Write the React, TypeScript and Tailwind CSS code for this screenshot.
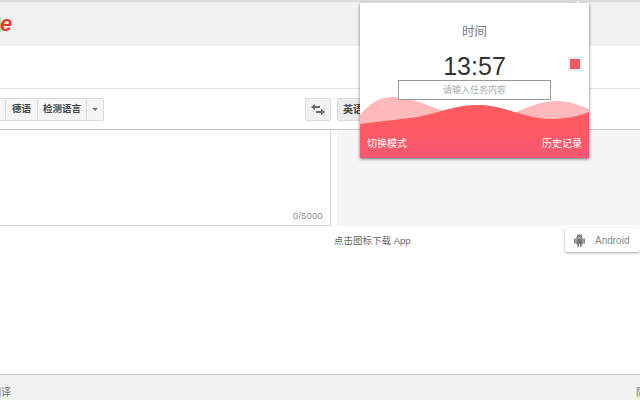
function AndroidIcon() {
  return (
    <svg width="13" height="13" viewBox="0 0 24 24" fill="#777">
      <path d="M6 18c0 .55.45 1 1 1h1v3.5c0 .83.67 1.5 1.5 1.5s1.5-.67 1.5-1.5V19h2v3.5c0 .83.67 1.5 1.5 1.5s1.5-.67 1.5-1.5V19h1c.55 0 1-.45 1-1V8H6v10zM3.5 8C2.67 8 2 8.67 2 9.5v7c0 .83.67 1.5 1.5 1.5S5 17.33 5 16.5v-7C5 8.67 4.33 8 3.5 8zm17 0c-.83 0-1.5.67-1.5 1.5v7c0 .83.67 1.5 1.5 1.5s1.5-.67 1.5-1.5v-7c0-.83-.67-1.5-1.5-1.5zm-4.97-5.84l1.3-1.3c.2-.2.2-.51 0-.71-.2-.2-.51-.2-.71 0l-1.48 1.48C13.85 1.23 12.95 1 12 1c-.96 0-1.86.23-2.66.63L7.85.15c-.2-.2-.51-.2-.71 0-.2.2-.2.51 0 .71l1.31 1.31C6.97 3.26 6 5.01 6 7h12c0-1.99-.97-3.75-2.47-4.84zM10 5H9V4h1v1zm5 0h-1V4h1v1z" />
    </svg>
  );
}

function Popup() {
  return (
    <>
      <div className="absolute left-[575px] top-[0px] w-[6px] h-[6px] rotate-45 bg-white border border-[#cccccc]" />
      <div className="absolute left-[360px] top-[3px] w-[229px] h-[155px] bg-white shadow-[0_1px_3px_rgba(0,0,0,0.55)] overflow-hidden flex flex-col items-center">
        <svg className="absolute left-0 top-0" width="229" height="155" viewBox="1 0 229 155">
          <defs>
            <linearGradient id="wg" x1="0" y1="0" x2="0" y2="1">
              <stop offset="0" stopColor="#ff5a5f" />
              <stop offset="0.55" stopColor="#fd5a64" />
              <stop offset="1" stopColor="#f25873" />
            </linearGradient>
          </defs>
          <path d="M0 113 C10 101 20 94 33 94 C50 94 65 101 82 107 L150 112 C165 106 180 98 198 98 C210 98 220 102 230 106 L230 130 L0 130 Z" fill="#ffb9bb" />
          <path d="M0 121 C20 119 40 116 58 114 C80 110 95 102 120 102 C145 102 165 116 192 116 C205 116 218 114 230 109 L230 155 L0 155 Z" fill="url(#wg)" />
        </svg>
        <div className="relative mt-[20px] text-[12.5px] leading-[18px] text-[#777]">时间</div>
        <div className="relative mt-[9px] text-[25px] leading-[32px] text-[#333] font-['Liberation_Sans',sans-serif]">13:57</div>
        <div className="absolute right-[7px] top-[54px] w-[14px] h-[14px] border-2 border-[#f1f1f1] bg-[#ff5565]" />
        <div className="relative mt-[-2px] w-[153px] h-[20px] border border-[#999] bg-white text-center text-[9px] leading-[18px] text-[#aaa]">请输入任务内容</div>
        <div className="absolute left-[7px] right-[7px] bottom-[6px] flex justify-between text-[10px] leading-[16px] text-white">
          <span>切换模式</span>
          <span>历史记录</span>
        </div>
      </div>
    </>
  );
}

export default function App() {
  return (
    <div className="relative w-[640px] h-[400px] overflow-hidden bg-white flex flex-col font-['Liberation_Sans','Noto_Sans_CJK_SC',sans-serif]">
      <div className="h-[46px] shrink-0 bg-[#f1f1f1] border-t-2 border-[#dcdcdc] flex items-center">
        <div className="w-px h-[15px] bg-[#b5e0b5]" />
        <span className="ml-[-1px] text-[22px] leading-none font-bold italic text-[#ee3b2f] font-['Liberation_Sans',sans-serif]">e</span>
      </div>
      <div className="h-[43px] shrink-0 border-b border-[#e5e5e5]" />
      <div className="h-[41px] shrink-0 flex items-center pt-[1px] border-b border-[#c8c8c8]">
        <div className="flex h-[23px] items-stretch ml-[-10px] bg-[#f5f5f5] border border-[#dcdcdc] rounded-[2px] text-[9.5px] font-bold text-[#444]">
          <div className="w-[15px] border-r border-[#dcdcdc]" />
          <div className="w-[32px] flex items-center justify-center border-r border-[#dcdcdc]">德语</div>
          <div className="w-[49px] flex items-center justify-center border-r border-[#dcdcdc]">检测语言</div>
          <div className="w-[16px] flex items-center justify-center">
            <div className="border-x-[3px] border-t-[3px] border-x-transparent border-t-[#777]" />
          </div>
        </div>
        <div className="ml-[201px] w-[26px] h-[23px] bg-[#f1f1f1] border border-[#dcdcdc] rounded-[2px] flex items-center justify-center">
          <svg width="14" height="11" viewBox="0 0 14 11" fill="#666">
            <path d="M0 3 L4 0 V2 H9 V4 H4 V6 Z" />
            <path d="M14 8 L10 5 V7 H5 V9 H10 V11 Z" />
          </svg>
        </div>
        <div className="ml-[6px] w-[50px] h-[23px] bg-[#ececec] border border-[#dcdcdc] rounded-[2px] pl-[5px] text-[10px] leading-[21px] font-bold text-[#444]">英语</div>
      </div>
      <div className="h-[96px] shrink-0 flex">
        <div className="w-[331px] border-r border-b border-[#d5d5d5] flex items-end justify-end pr-[7px] pb-[3px] text-[9px] leading-[12px] tracking-[0.4px] text-[#888]">0/5000</div>
        <div className="ml-[6px] flex-1 bg-[#f5f5f5]" />
      </div>
      <div className="flex-1 flex items-start">
        <div className="ml-[334px] mt-[8px] text-[9.5px] leading-[14px] text-[#666]">点击图标下载 App</div>
        <div className="ml-auto mt-[2px] w-[75px] h-[24px] bg-white rounded-[2px] shadow-[0_1px_3px_rgba(0,0,0,0.35)] flex items-center pl-[8px] text-[10px] text-[#888]">
          <AndroidIcon />
          <span className="ml-[9px]">Android</span>
        </div>
      </div>
      <div className="h-[26px] shrink-0 bg-[#f1f1f1] border-t border-[#c8c8c8] flex items-start justify-between pt-[11px] text-[10px] leading-[14px] text-[#777]">
        <span className="ml-[-9px]">翻译</span>
        <span className="mr-[-6px]">隐</span>
      </div>
      <Popup />
    </div>
  );
}
